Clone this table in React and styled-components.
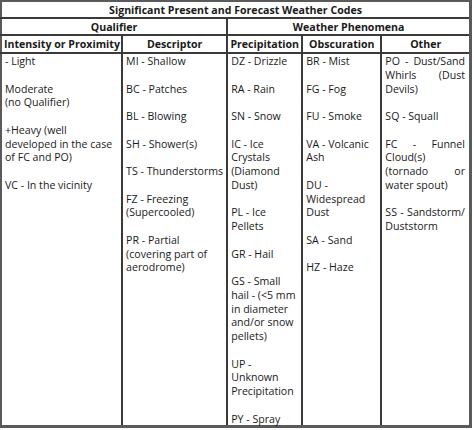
import React from "react";
import styled, { createGlobalStyle } from "styled-components";

const Global = createGlobalStyle`
  html, body { margin: 0; padding: 0; background: #fff; }
  body { font-family: "Open Sans", "Noto Sans", sans-serif; color: #1a1a1a; }
`;

const Page = styled.div`
  width: 474px;
  height: 430px;
  background: #fff;
`;

const Table = styled.table`
  width: 472px;
  border-collapse: collapse;
  table-layout: fixed;
  border: 2px solid #5a5a5a;
  border-right-width: 3px;
  border-bottom-width: 3px;
  font-size: 10.6px;
`;

const TitleCell = styled.th`
  height: 15px;
  padding: 0;
  font-weight: 700;
  text-align: center;
  line-height: 14px;
  border-bottom: 2px solid #3a3a3a;
  border-right: ${(p) => (p.$divider ? "2px solid #3a3a3a" : "none")};
`;

const HeadCell = styled.th`
  height: 16px;
  padding: 0 2px;
  font-weight: 700;
  text-align: center;
  line-height: 14px;
  border-bottom: 2px solid #3a3a3a;
  border-right: ${(p) => (p.$last ? "none" : "2px solid #3a3a3a")};
  white-space: nowrap;
`;

const BodyCell = styled.td`
  vertical-align: top;
  padding: 1px ${(p) => (p.$justify ? "4px" : "2px")} 0 3px;
  height: 360px;
  border-right: ${(p) => (p.$last ? "none" : "2px solid #3a3a3a")};
  text-align: ${(p) => (p.$justify ? "justify" : "left")};
  line-height: 13.75px;
`;

const Entry = styled.p`
  margin: 0 0 13.75px 0;
  &:last-child { margin-bottom: -1px; }
`;

const cols = [
  {
    w: 121,
    title: "Intensity or Proximity",
    items: [
      ["- Light"],
      ["Moderate", "(no Qualifier)"],
      ["+Heavy (well developed in the case of FC and PO)"],
      ["VC - In the vicinity"],
    ],
  },
  {
    w: 105,
    title: "Descriptor",
    items: [
      ["MI -  Shallow"],
      ["BC - Patches"],
      ["BL - Blowing"],
      ["SH - Shower(s)"],
      ["TS - Thunderstorms"],
      ["FZ - Freezing", "(Supercooled)"],
      ["PR - Partial", "(covering part of aerodrome)"],
    ],
  },
  {
    w: 75,
    title: "Precipitation",
    items: [
      ["DZ - Drizzle"],
      ["RA - Rain"],
      ["SN  - Snow"],
      ["IC - Ice Crystals (Diamond Dust)"],
      ["PL - Ice Pellets"],
      ["GR - Hail"],
      ["GS - Small hail - (<5 mm in diameter and/or snow pellets)"],
      ["UP - Unknown Precipitation"],
      ["PY - Spray"],
    ],
  },
  {
    w: 79,
    title: "Obscuration",
    items: [
      ["BR - Mist"],
      ["FG - Fog"],
      ["FU - Smoke"],
      ["VA - Volcanic Ash"],
      ["DU - Widespread Dust"],
      ["SA - Sand"],
      ["HZ - Haze"],
    ],
  },
  {
    w: 89,
    title: "Other",
    justify: true,
    items: [
      ["PO - Dust/Sand Whirls (Dust Devils)"],
      ["SQ - Squall"],
      ["FC - Funnel Cloud(s) (tornado or water spout)"],
      ["SS - Sandstorm/ Duststorm"],
    ],
  },
];

export default function App() {
  return (
    <Page>
      <Global />
      <Table>
        <colgroup>
          {cols.map((c) => (
            <col key={c.title} style={{ width: c.w }} />
          ))}
        </colgroup>
        <thead>
          <tr>
            <TitleCell colSpan={5}>Significant Present and Forecast Weather Codes</TitleCell>
          </tr>
          <tr>
            <TitleCell colSpan={2} $divider>Qualifier</TitleCell>
            <TitleCell colSpan={3}>Weather Phenomena</TitleCell>
          </tr>
          <tr>
            {cols.map((c, i) => (
              <HeadCell key={c.title} $last={i === cols.length - 1}>
                {c.title}
              </HeadCell>
            ))}
          </tr>
        </thead>
        <tbody>
          <tr>
            {cols.map((c, i) => (
              <BodyCell key={c.title} $last={i === cols.length - 1} $justify={c.justify}>
                {c.items.map((lines) => (
                  <Entry key={lines.join(" ")}>
                    {lines.map((l, j) => (
                      <React.Fragment key={j}>
                        {j > 0 && <br />}
                        {l}
                      </React.Fragment>
                    ))}
                  </Entry>
                ))}
              </BodyCell>
            ))}
          </tr>
        </tbody>
      </Table>
    </Page>
  );
}
